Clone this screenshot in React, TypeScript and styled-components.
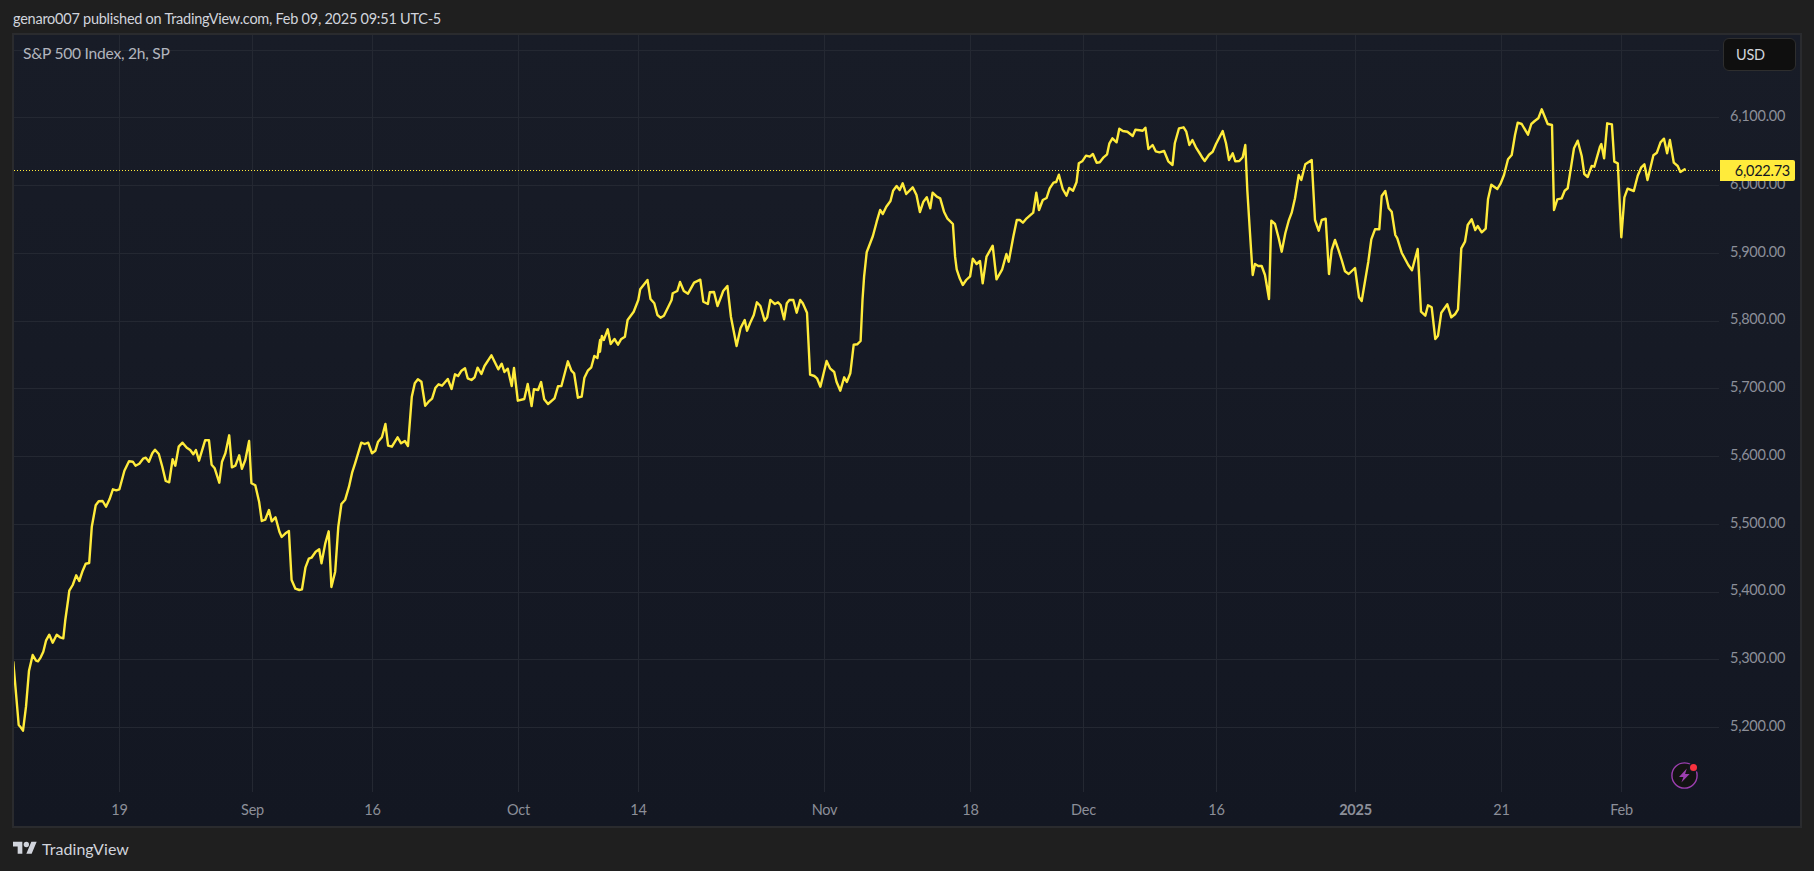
import { createGlobalStyle, styled } from "styled-components";

const FONT = `Lato, "Liberation Sans", sans-serif`;

// points read off the reference, kept per crop: [originX, originY, scaleX, scaleY, x,y ...]
const traced: [number, number, number, number, number[]][] = [
  [0, 600, 3, 3, [40,186,48,280,56,375,62,382,69,392,78,320,87,212,98,165,108,182,114,184,122,172,130,155,138,122,148,104,158,128,170,104,180,112,190,115,196,60]],
  [0, 300, 2.613, 3, [178,900,181,872,190,855,199,826,207,843,216,812,224,791,233,789,240,680,250,616,258,604,268,603,277,620,286,598,295,568,304,571,312,568,325,512,337,484,347,485,354,497,364,491,374,476,381,473,389,485,398,460,405,449,415,462,424,500,433,543,442,547,451,478,458,497,467,440,477,428,488,443,497,450,505,463,512,450,520,482,536,421,546,421,553,494,561,505,573,548,580,485,589,460,599,406,606,502,615,497,625,466,632,506,641,480,651,423,657,550,667,556,677,605,684,663,693,659,703,630,710,664,720,652,730,695,736,711,746,700,755,693,762,840,772,866,782,870,789,868,798,803,807,776,814,773,825,755,834,748,840,790,850,730,859,694,866,861,876,815,884,680,892,612,902,599,912,560,920,518,928,490,944,428,953,432,962,428,972,460,981,452,988,425,998,412,1007,372,1014,437,1024,440,1039,412,1048,430,1058,423,1066,438,1076,290,1084,250,1092,238,1101,245,1111,317,1120,305,1129,296,1138,263,1146,253,1155,257,1170,237,1180,267,1189,223,1197,228,1206,212,1215,205,1222,235,1232,240,1240,232,1248,203,1258,222,1266,198,1284,166,1302,208,1311,191,1318,216,1327,206,1337,258,1343,204,1353,302,1370,297,1379,252,1389,318,1395,268,1406,270,1414,246,1422,298,1432,312,1449,295,1458,259,1467,258,1484,184,1493,212,1500,220,1510,293,1520,290,1527,233,1536,212,1545,202,1553,168,1561,174,1568,120]],
  [600, 300, 2.613, 3, [0,155,5,108,10,120,20,88,28,132,38,117,47,134,55,118,65,110,72,60,88,35,100,0]],
  [600, 0, 2.613, 3, [105,868,124,840,132,897]],
  [600, 300, 2.613, 3, [142,10,150,45,158,53,167,47,178,22,187,0]],
  [600, 0, 2.613, 3, [190,880,202,873,209,846,219,873,230,881,246,848,262,839,270,905,282,912,287,877,298,876,307,918,316,892,322,873,333,858,337,900]],
  [600, 300, 2.613, 3, [342,50,357,138,367,85,378,60,384,92,392,70,402,45,410,7,419,18,430,62,437,52,445,0,450,5,457,12,465,7,472,15,481,58,488,10,495,0,505,0,514,38,523,0,530,10,541,38,549,224,560,228,567,235,576,260,592,183,601,205,612,216,618,245,628,272,638,232,645,246,654,220,663,134,672,133,681,123,686,0]],
  [600, 0, 2.613, 3, [690,830,697,757,713,708,723,665,732,630,739,642,748,620,759,603,766,572,775,558,783,570,791,550,800,582,817,562,827,585,836,636,845,605,854,592,863,625,869,578,880,590,889,595,899,635,908,656,922,672,928,770,932,808,940,835,948,855,957,840,967,829,974,776,984,792,993,783,1000,850,1010,770,1026,737,1036,838,1051,808,1062,762,1068,785,1080,710,1089,660,1097,660,1105,668,1115,655,1132,638,1140,578,1147,630,1157,600,1167,594,1175,565,1185,548,1192,546,1199,524,1209,567,1219,587,1226,564,1236,572,1245,547,1251,490,1260,484,1270,467,1280,470,1288,462,1298,488,1306,487,1316,472,1325,463,1331,430,1339,415,1350,427,1357,386,1366,393,1378,395,1392,408,1399,389,1410,391,1418,392,1425,383,1433,447,1444,435,1452,454,1462,457,1474,453,1485,484,1496,495,1502,430,1513,385,1525,382,1532,395,1540,435,1548,420,1557,442,1568,462]],
  [1200, 100, 3, 3, [8,175,14,183,27,164,38,155,48,132,68,93,78,130,87,180,98,160,106,184,118,183,128,172,136,135,142,270,150,400,158,525,165,492,175,498,185,498,195,525,207,597,214,362,225,372,236,415,245,455,256,400,266,362,275,338,285,295,296,225,304,240,316,193,335,180,345,360,356,392,365,360,377,356,387,522,395,450,405,420,415,448,425,480,435,514,446,522,465,504,477,592,485,603,505,485,514,418,525,388,538,388,545,288,556,273,566,325,575,335,586,405,592,415,605,458,625,495,636,511,653,447,663,635,676,647,684,616,695,622,706,717,714,707,724,638,742,613,754,652,765,643,774,628,784,445,795,425,803,375,815,358,826,390,833,378,845,397,857,386,864,298,874,254,892,267,902,250,912,225,924,178,935,165,945,105,953,68,965,72,984,104,994,72,1004,63,1015,55,1025,28,1043,72,1056,75,1062,330,1072,298,1085,295,1094,272,1103,265,1122,145,1133,122,1145,168,1153,222,1163,231,1175,198,1183,200,1200,140]],
  [1200, 0, 2.554, 3, [1025,432,1032,475,1040,370,1052,373,1058,485,1067,490,1076,712,1084,592,1092,566,1108,573,1118,527,1127,502,1135,493,1143,540,1158,466,1167,458,1176,427,1185,416,1193,460,1200,420,1210,488,1220,498,1227,516,1238,508]],
];

const linePoints = traced
  .flatMap(([ox, oy, sx, sy, pts]) =>
    pts.flatMap((v, i) => (i % 2 ? [] : [`${(ox + v / sx).toFixed(1)},${(oy + pts[i + 1] / sy).toFixed(1)}`])),
  )
  .join(" ");

const gridRows = [50.5, 117.5, 185.5, 253.5, 321.5, 388.5, 456.5, 524.5, 592.5, 659.5, 727.5];
const priceLabels = ["6,100.00", "6,000.00", "5,900.00", "5,800.00", "5,700.00", "5,600.00", "5,500.00", "5,400.00", "5,300.00", "5,200.00"];

const timeTicks = [
  { x: 119.5, label: "19" },
  { x: 252.5, label: "Sep" },
  { x: 372.5, label: "16" },
  { x: 518.5, label: "Oct" },
  { x: 638.5, label: "14" },
  { x: 824.5, label: "Nov" },
  { x: 970.5, label: "18" },
  { x: 1083.5, label: "Dec" },
  { x: 1216.5, label: "16" },
  { x: 1355.5, label: "2025", strong: true },
  { x: 1501.5, label: "21" },
  { x: 1621.5, label: "Feb" },
];

const PLOT_LEFT = 14;
const PLOT_TOP = 35;
const PLOT_WIDTH = 1705;
const PLOT_HEIGHT = 757;

const GlobalStyle = createGlobalStyle`
  html, body {
    margin: 0;
    background: #1f1f1f;
  }
`;

const Page = styled.div`
  display: flex;
  flex-direction: column;
  height: 871px;
  background: #1f1f1f;
  font-family: ${FONT};
  font-size: 14.5px;
  letter-spacing: -0.25px;
  overflow: hidden;
`;

const PublishLine = styled.div`
  height: 33px;
  flex: none;
  display: flex;
  align-items: center;
  padding: 4px 13px 0;
  box-sizing: border-box;
  color: #d1d4dc;
`;

const Frame = styled.div`
  flex: 1;
  margin: 0 12px;
  border: 2px solid #2a2b2e;
  display: grid;
  grid-template-columns: 1705px 81px;
  grid-template-rows: 757px 34px;
  background: linear-gradient(#181c27, #131722);
`;

const Plot = styled.div`
  position: relative;
`;

const ChartSvg = styled.svg`
  display: block;
`;

const Legend = styled.div`
  position: absolute;
  left: 9px;
  top: 9px;
  font-size: 15.6px;
  line-height: 18px;
  color: #b2b5be;
`;

const Watermark = styled.div`
  position: absolute;
  left: 1657px;
  top: 727px;
  width: 27px;
  height: 27px;
`;

const AlertDot = styled.span`
  position: absolute;
  left: 18.5px;
  top: 1.5px;
  width: 7px;
  height: 7px;
  border-radius: 50%;
  background: #f7323f;
  box-shadow: 0 0 0 1.5px #131722;
`;

const PriceAxis = styled.div`
  position: relative;
  display: flex;
  flex-direction: column;
  padding-top: 3px;
`;

const CurrencyBox = styled.div`
  flex: none;
  width: 73px;
  height: 33px;
  margin: 0 0 10.6px 4px;
  box-sizing: border-box;
  padding-left: 12px;
  display: flex;
  align-items: center;
  background: #0f0f0f;
  border: 1px solid #2e2e2e;
  border-radius: 6px;
  color: #d1d4dc;
`;

const PriceTick = styled.div`
  flex: none;
  height: 67.78px;
  display: flex;
  align-items: center;
  padding-left: 11px;
  color: #8c8f99;
`;

const LastPriceTag = styled.div`
  position: absolute;
  left: 1px;
  top: 125px;
  width: 75px;
  height: 21px;
  box-sizing: border-box;
  padding-right: 5px;
  display: flex;
  align-items: center;
  justify-content: flex-end;
  background: #ffeb3b;
  border-radius: 0 2px 2px 0;
  color: #131722;
`;

const TimeAxis = styled.div`
  position: relative;
  grid-column: 1 / -1;
`;

const TimeLabel = styled.span<{ $strong?: boolean }>`
  position: absolute;
  top: 9px;
  transform: translateX(-50%);
  line-height: 18px;
  color: #8c8f99;
  font-weight: ${({ $strong }) => ($strong ? 700 : 400)};
`;

const Brand = styled.div`
  height: 43px;
  flex: none;
  display: flex;
  align-items: center;
  gap: 5px;
  padding: 0 13px 2px;
  box-sizing: border-box;
  color: #d1d4dc;
  font-size: 16px;
  letter-spacing: 0.05px;
`;

function TvLogo() {
  return (
    <svg width="24" height="19" viewBox="0 0 36 28" fill="#d1d4dc">
      <path d="M14 22H7V11H0V4h14v18zM28 22h-8l7.5-18h8L28 22z" />
      <circle cx="20" cy="8" r="4" />
    </svg>
  );
}

function Bolt() {
  return (
    <svg width="27" height="27" viewBox="0 0 27 27">
      <circle cx="13.5" cy="13.5" r="12.6" fill="#131313" stroke="#9c3fb0" strokeWidth="1.4" />
      <path d="M15.8 6.6 8 15h4.4l-2 5.6L18.6 12h-4.5l1.7-5.4z" fill="#9c3fb0" />
    </svg>
  );
}

export default function App() {
  return (
    <>
      <GlobalStyle />
      <Page>
        <PublishLine>genaro007 published on TradingView.com, Feb 09, 2025 09:51 UTC-5</PublishLine>
        <Frame>
          <Plot>
            <ChartSvg
              width={PLOT_WIDTH}
              height={PLOT_HEIGHT}
              viewBox={`${PLOT_LEFT} ${PLOT_TOP} ${PLOT_WIDTH} ${PLOT_HEIGHT}`}
            >
              {timeTicks.map((t) => (
                <line key={t.x} x1={t.x} x2={t.x} y1={PLOT_TOP} y2={PLOT_TOP + PLOT_HEIGHT} stroke="#242832" />
              ))}
              {gridRows.map((y) => (
                <line key={y} x1={PLOT_LEFT} x2={PLOT_LEFT + PLOT_WIDTH} y1={y} y2={y} stroke="#242832" />
              ))}
              <line
                x1={PLOT_LEFT}
                x2={PLOT_LEFT + PLOT_WIDTH}
                y1={170.5}
                y2={170.5}
                stroke="#ffeb3b"
                strokeDasharray="1 2"
              />
              <polyline
                points={linePoints}
                fill="none"
                stroke="#ffeb3b"
                strokeWidth="2.4"
                strokeLinejoin="round"
                strokeLinecap="round"
              />
            </ChartSvg>
            <Legend>S&amp;P 500 Index, 2h, SP</Legend>
            <Watermark>
              <Bolt />
              <AlertDot />
            </Watermark>
          </Plot>
          <PriceAxis>
            <CurrencyBox>USD</CurrencyBox>
            {priceLabels.map((label) => (
              <PriceTick key={label}>{label}</PriceTick>
            ))}
            <LastPriceTag>6,022.73</LastPriceTag>
          </PriceAxis>
          <TimeAxis>
            {timeTicks.map((t) => (
              <TimeLabel key={t.x} $strong={t.strong} style={{ left: t.x - PLOT_LEFT }}>
                {t.label}
              </TimeLabel>
            ))}
          </TimeAxis>
        </Frame>
        <Brand>
          <TvLogo />
          TradingView
        </Brand>
      </Page>
    </>
  );
}
